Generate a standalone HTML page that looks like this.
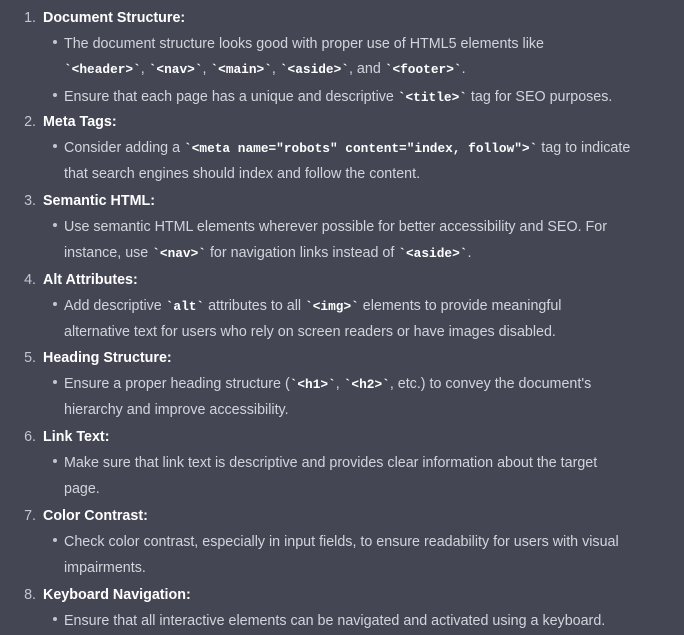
<!DOCTYPE html>
<html><head><meta charset="utf-8"><style>
html,body{margin:0;padding:0;background:#444654;width:684px;height:635px;overflow:hidden}
body{font-family:"Liberation Sans",sans-serif;font-size:14.3px;color:#d1d5db;position:relative}
.l{position:absolute;white-space:nowrap;line-height:20px}
.n{position:absolute;width:36px;text-align:right;line-height:20px;left:0;color:#c5c5d2}
b{color:#fff;font-weight:bold}
code{font-family:"Liberation Mono",monospace;font-weight:bold;font-size:12.8px;color:#fff}
.d{position:absolute;left:53px;width:4px;height:4px;border-radius:50%;background:#c5c5d2}
</style></head><body>
<div class="n" style="top:8px">1.</div><div class="l" style="left:43px;top:8px"><b>Document Structure:</b></div>
<div class="d" style="top:40px"></div><div class="l" style="left:64px;top:34px">The document structure looks good with proper use of HTML5 elements like</div>
<div class="l" style="left:64px;top:59px"><code>`&lt;header&gt;`</code>, <code>`&lt;nav&gt;`</code>, <code>`&lt;main&gt;`</code>, <code>`&lt;aside&gt;`</code>, and <code>`&lt;footer&gt;`</code>.</div>
<div class="d" style="top:93px"></div><div class="l" style="left:64px;top:87px">Ensure that each page has a unique and descriptive <code>`&lt;title&gt;`</code> tag for SEO purposes.</div>

<div class="n" style="top:112px">2.</div><div class="l" style="left:43px;top:112px"><b>Meta Tags:</b></div>
<div class="d" style="top:144px"></div><div class="l" style="left:64px;top:138px">Consider adding a <code>`&lt;meta name="robots" content="index, follow"&gt;`</code> tag to indicate</div>
<div class="l" style="left:64px;top:164px">that search engines should index and follow the content.</div>

<div class="n" style="top:191px">3.</div><div class="l" style="left:43px;top:191px"><b>Semantic HTML:</b></div>
<div class="d" style="top:223px"></div><div class="l" style="left:64px;top:217px">Use semantic HTML elements wherever possible for better accessibility and SEO. For</div>
<div class="l" style="left:64px;top:243px">instance, use <code>`&lt;nav&gt;`</code> for navigation links instead of <code>`&lt;aside&gt;`</code>.</div>

<div class="n" style="top:270px">4.</div><div class="l" style="left:43px;top:270px"><b>Alt Attributes:</b></div>
<div class="d" style="top:302px"></div><div class="l" style="left:64px;top:296px">Add descriptive <code>`alt`</code> attributes to all <code>`&lt;img&gt;`</code> elements to provide meaningful</div>
<div class="l" style="left:64px;top:322px">alternative text for users who rely on screen readers or have images disabled.</div>

<div class="n" style="top:348px">5.</div><div class="l" style="left:43px;top:348px"><b>Heading Structure:</b></div>
<div class="d" style="top:380px"></div><div class="l" style="left:64px;top:374px">Ensure a proper heading structure (<code>`&lt;h1&gt;`</code>, <code>`&lt;h2&gt;`</code>, etc.) to convey the document's</div>
<div class="l" style="left:64px;top:400px">hierarchy and improve accessibility.</div>

<div class="n" style="top:427px">6.</div><div class="l" style="left:43px;top:427px"><b>Link Text:</b></div>
<div class="d" style="top:459px"></div><div class="l" style="left:64px;top:453px">Make sure that link text is descriptive and provides clear information about the target</div>
<div class="l" style="left:64px;top:479px">page.</div>

<div class="n" style="top:506px">7.</div><div class="l" style="left:43px;top:506px"><b>Color Contrast:</b></div>
<div class="d" style="top:538px"></div><div class="l" style="left:64px;top:532px">Check color contrast, especially in input fields, to ensure readability for users with visual</div>
<div class="l" style="left:64px;top:558px">impairments.</div>

<div class="n" style="top:585px">8.</div><div class="l" style="left:43px;top:585px"><b>Keyboard Navigation:</b></div>
<div class="d" style="top:617px"></div><div class="l" style="left:64px;top:611px">Ensure that all interactive elements can be navigated and activated using a keyboard.</div>
</body></html>
